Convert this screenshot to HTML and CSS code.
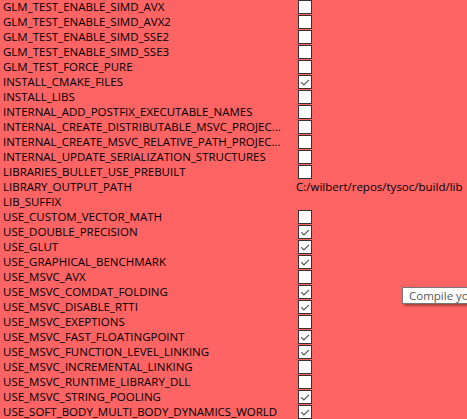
FILE: index.html
```html
<!DOCTYPE html>
<html>
<head>
<meta charset="utf-8">
<link rel="stylesheet" href="styles.css">
</head>
<body>
<div class="view">
  <div class="list">
    <div class="row"><span class="name">GLM_TEST_ENABLE_SIMD_AVX</span><span class="val"><span class="cb"></span></span></div>
    <div class="row"><span class="name">GLM_TEST_ENABLE_SIMD_AVX2</span><span class="val"><span class="cb"></span></span></div>
    <div class="row"><span class="name">GLM_TEST_ENABLE_SIMD_SSE2</span><span class="val"><span class="cb"></span></span></div>
    <div class="row"><span class="name">GLM_TEST_ENABLE_SIMD_SSE3</span><span class="val"><span class="cb"></span></span></div>
    <div class="row"><span class="name">GLM_TEST_FORCE_PURE</span><span class="val"><span class="cb"></span></span></div>
    <div class="row"><span class="name">INSTALL_CMAKE_FILES</span><span class="val"><span class="cb on"><svg viewBox="0 0 13 13"><polyline points="2.5,6.8 5.3,9.6 10.8,4.2"/></svg></span></span></div>
    <div class="row"><span class="name">INSTALL_LIBS</span><span class="val"><span class="cb"></span></span></div>
    <div class="row"><span class="name">INTERNAL_ADD_POSTFIX_EXECUTABLE_NAMES</span><span class="val"><span class="cb"></span></span></div>
    <div class="row"><span class="name">INTERNAL_CREATE_DISTRIBUTABLE_MSVC_PROJEC...</span><span class="val"><span class="cb"></span></span></div>
    <div class="row"><span class="name">INTERNAL_CREATE_MSVC_RELATIVE_PATH_PROJEC...</span><span class="val"><span class="cb"></span></span></div>
    <div class="row"><span class="name">INTERNAL_UPDATE_SERIALIZATION_STRUCTURES</span><span class="val"><span class="cb"></span></span></div>
    <div class="row"><span class="name">LIBRARIES_BULLET_USE_PREBUILT</span><span class="val"><span class="cb"></span></span></div>
    <div class="row"><span class="name">LIBRARY_OUTPUT_PATH</span><span class="val"><span class="txt">C:/wilbert/repos/tysoc/build/lib</span></span></div>
    <div class="row"><span class="name">LIB_SUFFIX</span><span class="val"></span></div>
    <div class="row"><span class="name">USE_CUSTOM_VECTOR_MATH</span><span class="val"><span class="cb"></span></span></div>
    <div class="row"><span class="name">USE_DOUBLE_PRECISION</span><span class="val"><span class="cb on"><svg viewBox="0 0 13 13"><polyline points="2.5,6.8 5.3,9.6 10.8,4.2"/></svg></span></span></div>
    <div class="row"><span class="name">USE_GLUT</span><span class="val"><span class="cb on"><svg viewBox="0 0 13 13"><polyline points="2.5,6.8 5.3,9.6 10.8,4.2"/></svg></span></span></div>
    <div class="row"><span class="name">USE_GRAPHICAL_BENCHMARK</span><span class="val"><span class="cb on"><svg viewBox="0 0 13 13"><polyline points="2.5,6.8 5.3,9.6 10.8,4.2"/></svg></span></span></div>
    <div class="row"><span class="name">USE_MSVC_AVX</span><span class="val"><span class="cb"></span></span></div>
    <div class="row"><span class="name">USE_MSVC_COMDAT_FOLDING</span><span class="val"><span class="cb on"><svg viewBox="0 0 13 13"><polyline points="2.5,6.8 5.3,9.6 10.8,4.2"/></svg></span></span></div>
    <div class="row"><span class="name">USE_MSVC_DISABLE_RTTI</span><span class="val"><span class="cb on"><svg viewBox="0 0 13 13"><polyline points="2.5,6.8 5.3,9.6 10.8,4.2"/></svg></span></span></div>
    <div class="row"><span class="name">USE_MSVC_EXEPTIONS</span><span class="val"><span class="cb"></span></span></div>
    <div class="row"><span class="name">USE_MSVC_FAST_FLOATINGPOINT</span><span class="val"><span class="cb on"><svg viewBox="0 0 13 13"><polyline points="2.5,6.8 5.3,9.6 10.8,4.2"/></svg></span></span></div>
    <div class="row"><span class="name">USE_MSVC_FUNCTION_LEVEL_LINKING</span><span class="val"><span class="cb on"><svg viewBox="0 0 13 13"><polyline points="2.5,6.8 5.3,9.6 10.8,4.2"/></svg></span></span></div>
    <div class="row"><span class="name">USE_MSVC_INCREMENTAL_LINKING</span><span class="val"><span class="cb"></span></span></div>
    <div class="row"><span class="name">USE_MSVC_RUNTIME_LIBRARY_DLL</span><span class="val"><span class="cb"></span></span></div>
    <div class="row"><span class="name">USE_MSVC_STRING_POOLING</span><span class="val"><span class="cb on"><svg viewBox="0 0 13 13"><polyline points="2.5,6.8 5.3,9.6 10.8,4.2"/></svg></span></span></div>
    <div class="row"><span class="name">USE_SOFT_BODY_MULTI_BODY_DYNAMICS_WORLD</span><span class="val"><span class="cb on"><svg viewBox="0 0 13 13"><polyline points="2.5,6.8 5.3,9.6 10.8,4.2"/></svg></span></span></div>
  </div>
  <div class="tooltip">Compile yo</div>
</div>
</body>
</html>
```
FILE: styles.css
```css
html, body {
  margin: 0;
  padding: 0;
}
body {
  width: 467px;
  height: 419px;
  overflow: hidden;
  background: #ff6464;
  font-family: "Open Sans", "Noto Sans", sans-serif;
  font-size: 11.5px;
  color: #000000;
}
.view {
  position: relative;
  width: 467px;
  height: 419px;
  overflow: hidden;
}
.list {
  display: flex;
  flex-direction: column;
  margin-top: -1px;
}
.row {
  display: grid;
  grid-template-columns: 295px 1fr;
  height: 15px;
  align-items: center;
  line-height: 15px;
}
.name {
  padding-left: 3px;
  white-space: nowrap;
  overflow: hidden;
}
.val {
  display: flex;
  align-items: center;
  height: 15px;
  white-space: nowrap;
}
.txt {
  padding-left: 1px;
}
.cb {
  box-sizing: border-box;
  width: 14px;
  height: 14px;
  margin-left: 3px;
  border: 1px solid #333333;
  background: #ffffff;
  display: flex;
}
.cb svg {
  width: 12px;
  height: 12px;
}
.cb polyline {
  fill: none;
  stroke: #555555;
  stroke-width: 1.3;
}
.tooltip {
  position: absolute;
  left: 402px;
  top: 287px;
  width: 70px;
  height: 15px;
  padding: 0 6px;
  line-height: 15px;
  background: #ffffff;
  border: 1px solid #767676;
  color: #575757;
  white-space: nowrap;
  box-shadow: 2px 2px 2px rgba(0, 0, 0, 0.35);
}
```
